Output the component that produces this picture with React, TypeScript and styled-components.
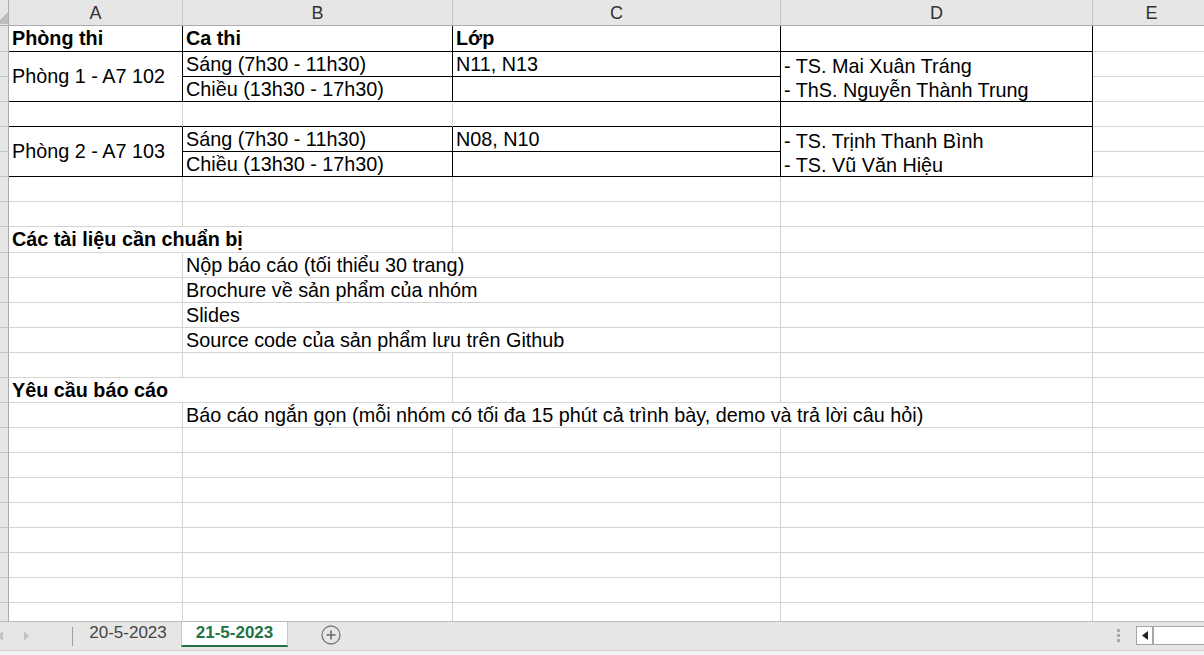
import React from 'react';
import styled, { createGlobalStyle } from 'styled-components';

const Global = createGlobalStyle`
  html, body { margin: 0; padding: 0; background: #fff; overflow: hidden; }
  #root { width: 1204px; height: 655px; }
`;

const BLACK = '#000000';
const GRID = '#d4d4d4';
const NONE = 'transparent';
const COLS = ['A', 'B', 'C', 'D', 'E'];

const Page = styled.div`
  width: 1204px;
  height: 655px;
  display: flex;
  flex-direction: column;
  overflow: hidden;
  font-family: "Liberation Sans", Arial, sans-serif;
`;

const Sheet = styled.div`
  flex: 0 0 621px;
  height: 621px;
  overflow: hidden;
  display: grid;
  grid-template-columns: 9px 174px 270px 328px 312px 118px;
  grid-template-rows: 26px 26px repeat(7, 25px) 26px repeat(15, 25px);
`;

const Corner = styled.div`
  grid-row: 1;
  grid-column: 1;
  box-sizing: border-box;
  background: #e6e6e6;
  border-right: 1px solid #ababab;
  border-bottom: 1px solid #ababab;
  overflow: hidden;
  display: flex;
  align-items: flex-end;
`;

const ColHead = styled.div<{ $col: number }>`
  grid-row: 1;
  grid-column: ${p => p.$col};
  box-sizing: border-box;
  background: #e6e6e6;
  border-right: 1px solid #c6c6c6;
  border-bottom: 1px solid #ababab;
  color: #333;
  font-size: 18px;
  line-height: 23px;
  padding-top: 2px;
  text-align: center;
`;

const RowHead = styled.div<{ $row: number }>`
  grid-row: ${p => p.$row};
  grid-column: 1;
  box-sizing: border-box;
  background: #e6e6e6;
  border-right: 1px solid #ababab;
  border-bottom: 1px solid #c6c6c6;
`;

const Cell = styled.div<{
  $row: number;
  $col: number;
  $span: number;
  $right: string;
  $bottom: string;
  $bold: boolean;
  $mode: 'top' | 'center' | 'wrap';
}>`
  grid-row: ${p => p.$row} / span ${p => p.$span};
  grid-column: ${p => p.$col};
  box-sizing: border-box;
  min-width: 0;
  border-right: 1px solid ${p => p.$right};
  border-bottom: 1px solid ${p => p.$bottom};
  padding: ${p => (p.$mode === 'wrap' ? '2px 3px 0' : '0 3px')};
  font-size: 19.8px;
  line-height: ${p => (p.$mode === 'wrap' ? '24px' : '25px')};
  font-weight: ${p => (p.$bold ? 700 : 400)};
  color: #000;
  white-space: nowrap;
  overflow: visible;
  display: flex;
  flex-direction: column;
  justify-content: ${p => (p.$mode === 'center' ? 'center' : 'flex-start')};
`;

const Line = styled.span`
  display: block;
`;

const TabBar = styled.div`
  flex: 0 0 29px;
  height: 29px;
  box-sizing: border-box;
  border-top: 1px solid #bcbcbc;
  background: #e6e6e6;
  display: flex;
  align-items: flex-start;
  overflow: hidden;
`;

const NavArea = styled.div`
  width: 72px;
  height: 28px;
  flex-shrink: 0;
  display: flex;
  align-items: center;
  gap: 21px;
  margin-left: -3px;
`;

const Separator = styled.div`
  width: 1px;
  height: 19px;
  margin-top: 5px;
  background: #9e9e9e;
  flex-shrink: 0;
  margin-left: 3px;
`;

const Tab = styled.div<{ $active?: boolean }>`
  box-sizing: border-box;
  flex-shrink: 0;
  width: ${p => (p.$active ? '107px' : '108px')};
  height: ${p => (p.$active ? '25px' : '24px')};
  background: ${p => (p.$active ? '#ffffff' : 'transparent')};
  border-left: ${p => (p.$active ? '1px solid #c6c6c6' : 'none')};
  border-right: ${p => (p.$active ? '1px solid #c6c6c6' : 'none')};
  border-bottom: ${p => (p.$active ? '2px solid #217346' : 'none')};
  color: ${p => (p.$active ? '#217346' : '#444')};
  font-weight: ${p => (p.$active ? 700 : 400)};
  font-size: 17px;
  line-height: 21px;
  text-align: center;
  padding-left: ${p => (p.$active ? '0' : '2px')};
`;

const AddButton = styled.div`
  margin-left: 33px;
  margin-top: 3px;
  width: 20px;
  height: 20px;
  flex-shrink: 0;
  display: flex;
`;

const Spacer = styled.div`
  flex: 1;
`;

const Dots = styled.div`
  display: flex;
  flex-direction: column;
  gap: 2px;
  margin-top: 7px;
  margin-right: 16px;
  flex-shrink: 0;
`;

const Dot = styled.div`
  width: 3px;
  height: 3px;
  background: #a8a8a8;
`;

const Scroll = styled.div`
  width: 68px;
  height: 19px;
  margin-top: 4px;
  box-sizing: border-box;
  border: 1px solid #a6a6a6;
  border-right: none;
  background: #fff;
  display: flex;
  flex-shrink: 0;
`;

const ScrollBtn = styled.div`
  width: 17px;
  height: 100%;
  box-sizing: border-box;
  border-right: 2px solid #a6a6a6;
  display: flex;
  align-items: center;
  justify-content: center;
`;

const BottomStrip = styled.div`
  flex: 0 0 5px;
  box-sizing: border-box;
  border-top: 1px solid #cfcfcf;
  background: #f3f3f3;
`;

type Content = { text: string | string[]; bold?: boolean };

const CONTENT: Record<string, Content> = {
  A1: { text: 'Phòng thi', bold: true },
  B1: { text: 'Ca thi', bold: true },
  C1: { text: 'Lớp', bold: true },
  A2: { text: 'Phòng 1 - A7 102' },
  B2: { text: 'Sáng (7h30 - 11h30)' },
  C2: { text: 'N11, N13' },
  D2: { text: ['- TS. Mai Xuân Tráng', '- ThS. Nguyễn Thành Trung'] },
  B3: { text: 'Chiều (13h30 - 17h30)' },
  A5: { text: 'Phòng 2 - A7 103' },
  B5: { text: 'Sáng (7h30 - 11h30)' },
  C5: { text: 'N08, N10' },
  D5: { text: ['- TS. Trịnh Thanh Bình', '- TS. Vũ Văn Hiệu'] },
  B6: { text: 'Chiều (13h30 - 17h30)' },
  A9: { text: 'Các tài liệu cần chuẩn bị', bold: true },
  B10: { text: 'Nộp báo cáo (tối thiểu 30 trang)' },
  B11: { text: 'Brochure về sản phẩm của nhóm' },
  B12: { text: 'Slides' },
  B13: { text: 'Source code của sản phẩm lưu trên Github' },
  A15: { text: 'Yêu cầu báo cáo', bold: true },
  B16: { text: 'Báo cáo ngắn gọn (mỗi nhóm có tối đa 15 phút cả trình bày, demo và trả lời câu hỏi)' },
};

const SKIP = ['A3', 'D3', 'A6', 'D6'];
const MERGED = ['A2', 'D2', 'A5', 'D5'];
const OVERFLOW = ['A9', 'B10', 'B11', 'B12', 'B13', 'A15', 'B16', 'C16'];
const ROWS = 24;

function buildCells() {
  const out: React.ReactNode[] = [];
  for (let r = 1; r <= ROWS; r++) {
    out.push(<RowHead key={`rh${r}`} $row={r + 1} />);
    for (let c = 0; c < COLS.length; c++) {
      const key = `${COLS[c]}${r}`;
      if (SKIP.includes(key)) continue;
      const merged = MERGED.includes(key);
      let right = GRID;
      let bottom = GRID;
      if (r <= 6 && c <= 3) {
        right = BLACK;
        bottom = BLACK;
        if (r === 4 && c <= 1) right = GRID;
      }
      if (OVERFLOW.includes(key)) right = NONE;
      const content = CONTENT[key];
      const lines = content ? (Array.isArray(content.text) ? content.text : [content.text]) : [];
      const mode: 'top' | 'center' | 'wrap' = merged ? (lines.length > 1 ? 'wrap' : 'center') : 'top';
      out.push(
        <Cell
          key={key}
          $row={r + 1}
          $col={c + 2}
          $span={merged ? 2 : 1}
          $right={right}
          $bottom={bottom}
          $bold={!!content?.bold}
          $mode={mode}
        >
          {lines.map((l, i) => (
            <Line key={i}>{l}</Line>
          ))}
        </Cell>
      );
    }
  }
  return out;
}

export default function App() {
  return (
    <Page>
      <Global />
      <Sheet>
        <Corner>
          <svg width="8" height="22" viewBox="0 0 8 22">
            <polygon points="8,9 8,21 -4,21" fill="#bdbdbd" />
          </svg>
        </Corner>
        {COLS.map((l, i) => (
          <ColHead key={l} $col={i + 2}>
            {l}
          </ColHead>
        ))}
        {buildCells()}
      </Sheet>
      <TabBar>
        <NavArea>
          <svg width="6" height="10" viewBox="0 0 6 10">
            <polygon points="6,0 6,10 0,5" fill="#c3c3c3" />
          </svg>
          <svg width="6" height="10" viewBox="0 0 6 10">
            <polygon points="0,0 0,10 5,5" fill="#c3c3c3" />
          </svg>
        </NavArea>
        <Separator />
        <Tab>20-5-2023</Tab>
        <Tab $active>21-5-2023</Tab>
        <AddButton>
          <svg width="20" height="20" viewBox="0 0 20 20">
            <circle cx="10" cy="10" r="9" fill="none" stroke="#7a7a7a" strokeWidth="1.3" />
            <line x1="5.5" y1="10" x2="14.5" y2="10" stroke="#6e6e6e" strokeWidth="1.6" />
            <line x1="10" y1="5.5" x2="10" y2="14.5" stroke="#6e6e6e" strokeWidth="1.6" />
          </svg>
        </AddButton>
        <Spacer />
        <Dots>
          <Dot />
          <Dot />
          <Dot />
        </Dots>
        <Scroll>
          <ScrollBtn>
            <svg width="6" height="9" viewBox="0 0 6 9">
              <polygon points="6,0 6,9 0,4.5" fill="#222" />
            </svg>
          </ScrollBtn>
        </Scroll>
      </TabBar>
      <BottomStrip />
    </Page>
  );
}
